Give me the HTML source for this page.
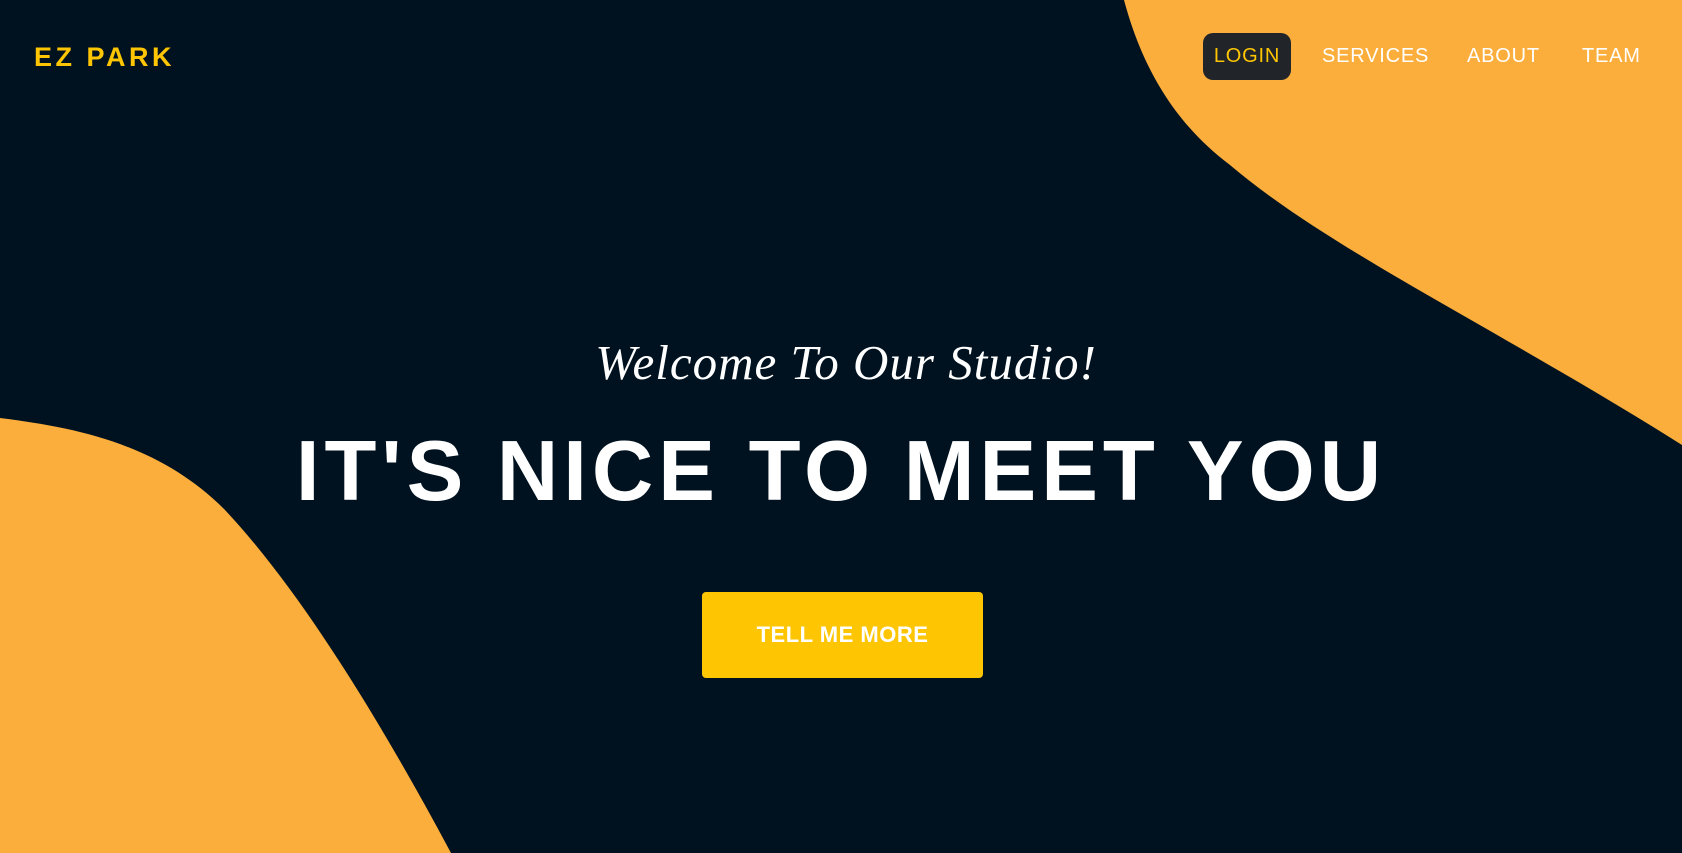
<!DOCTYPE html>
<html><head><style>
html,body{margin:0;padding:0;width:1682px;height:853px;overflow:hidden;background:#001220;font-family:"Liberation Sans",sans-serif}
svg.bg{position:absolute;left:0;top:0}
.logo{position:absolute;left:34px;top:42px;color:#fec503;font-weight:bold;font-size:27px;letter-spacing:3.5px}
.nav{position:absolute;top:33px;height:47px;line-height:47px;color:#fff;font-size:20px;letter-spacing:0.8px}
.login{left:1203px;width:88px;background:#212529;border-radius:10px;color:#fec503;text-align:center}
h2{position:absolute;left:0;width:1682px;top:334px;margin:0;padding-left:10px;box-sizing:border-box;text-align:center;color:#fff;font:italic 49px "Liberation Serif",serif;letter-spacing:1px}
h1{position:absolute;left:0;width:1682px;top:422px;margin:0;text-align:center;color:#fff;font-weight:bold;font-size:85px;letter-spacing:5px;line-height:100px}
.btn{position:absolute;left:702px;top:592px;width:281px;height:86px;background:#fec503;border-radius:4px;color:#fff;font-weight:bold;font-size:22px;text-align:center;line-height:86px;letter-spacing:0.5px}
</style></head><body>
<svg class="bg" width="1682" height="853">
<path d="M1124 0 C1140 60 1170 120 1230 165 C1330 250 1500 330 1682 445 L1682 0 Z" fill="#fbae3c"/>
<path d="M0 418 C80 428 160 445 225 510 C300 590 380 720 451 853 L0 853 Z" fill="#fbae3c"/>
</svg>
<div class="logo">EZ PARK</div>
<div class="nav login">LOGIN</div>
<div class="nav" style="left:1322px">SERVICES</div>
<div class="nav" style="left:1467px">ABOUT</div>
<div class="nav" style="left:1582px">TEAM</div>
<h2>Welcome To Our Studio!</h2>
<h1>IT'S NICE TO MEET YOU</h1>
<div class="btn">TELL ME MORE</div>
</body></html>
